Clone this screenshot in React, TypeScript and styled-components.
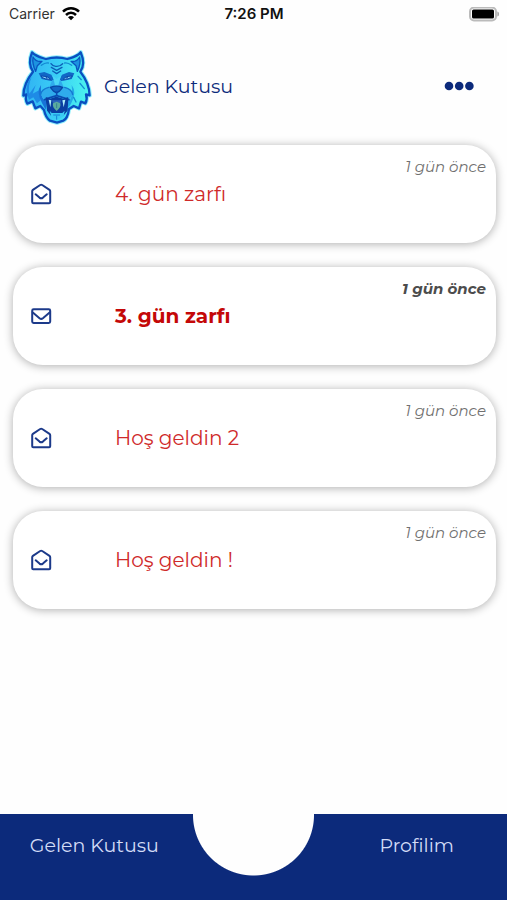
import React from "react";
import styled, { createGlobalStyle } from "styled-components";

const navy = "#0c2a7b";

const GlobalStyle = createGlobalStyle`
  *, *::before, *::after { box-sizing: border-box; }
  body {
    margin: 0;
    background: #fefefe;
    font-family: Montserrat, Inter, sans-serif;
    color: ${navy};
    -webkit-font-smoothing: antialiased;
  }
  button { font: inherit; color: inherit; background: none; border: 0; padding: 0; cursor: pointer; }
`;

const Screen = styled.div`
  min-height: 100vh;
  display: flex;
  flex-direction: column;
`;

const StatusBar = styled.div`
  display: grid;
  grid-template-columns: 1fr auto 1fr;
  align-items: center;
  height: 28px;
  padding: 0 8px 0 9px;
  font-family: Inter, sans-serif;
  font-size: 14px;
  line-height: 20px;
  color: #111;
`;

const Carrier = styled.span`
  display: flex;
  align-items: center;
  gap: 7px;
  color: #333;
`;

const Clock = styled.time`
  font-size: 15px;
  font-weight: 600;
`;

const Battery = styled.span`
  display: flex;
  justify-content: flex-end;
`;

const Header = styled.header`
  display: flex;
  align-items: center;
  height: 92px;
  margin: 12px 0 13px;
  padding: 0 33px 0 15px;
`;

const Title = styled.h1`
  flex: 1;
  margin: 0 0 0 4px;
  font-size: 19px;
  line-height: 27px;
  font-weight: 400;
`;

const MenuButton = styled.button`
  display: flex;
  align-items: center;
  height: 32px;
`;

const Inbox = styled.main`
  flex: 1;
  padding: 0 11px 24px 13px;
`;

const MessageList = styled.ul`
  display: flex;
  flex-direction: column;
  gap: 24px;
  margin: 0;
  padding: 0;
  list-style: none;
`;

const MessageCard = styled.button<{ $unread: boolean }>`
  display: grid;
  grid-template-columns: 84px 1fr auto;
  align-items: center;
  width: 100%;
  min-height: 98px;
  padding: 12px 10px 12px 18px;
  border-radius: 30px;
  background: #fff;
  box-shadow: 0 1px 10px rgba(0, 0, 0, 0.32);
  text-align: left;
  font-weight: ${(p) => (p.$unread ? 700 : 400)};
`;

const Envelope = styled.span`
  display: flex;
`;

const Subject = styled.span<{ $unread: boolean }>`
  font-size: 20px;
  line-height: 28px;
  color: ${(p) => (p.$unread ? "#c40808" : "#cf2a2a")};
`;

const Age = styled.span<{ $unread: boolean }>`
  align-self: start;
  font-size: 15px;
  line-height: 20px;
  font-style: italic;
  color: ${(p) => (p.$unread ? "#4c4c4c" : "#707070")};
`;

const TabBar = styled.nav`
  display: grid;
  grid-template-columns: 1fr 122px 1fr;
  height: 86px;
  background: radial-gradient(circle at 50% 1px, #fefefe 60px, ${navy} 61px);
`;

const Tab = styled.a`
  grid-row: 1;
  padding: 18px 0 0;
  font-size: 19px;
  line-height: 28px;
  text-align: center;
  text-decoration: none;
  color: #d3dcf6;

  &:first-child { grid-column: 1; padding-right: 4px; }
  &:last-child { grid-column: 3; padding-left: 12px; }
`;

const WifiIcon = () => (
  <svg width="18" height="14" viewBox="0 0 18 14" aria-hidden="true">
    <g fill="none" stroke="#000" strokeWidth="2.5">
      <path d="M1 4.700C5.500.2 12.500.2 17 4.700" />
      <path d="M4 8c2.900-2.900 7.100-2.900 10 0" />
    </g>
    <path d="M6 10.200c1.800-1.600 4.200-1.600 6 0L9 13.300Z" />
  </svg>
);

const BatteryIcon = () => (
  <svg width="31" height="15" viewBox="0 0 31 15" aria-label="Battery full" role="img">
    <rect x="2" y="0.500" width="26" height="13" rx="4" fill="#fff" stroke="#bbb" strokeWidth="2" />
    <rect x="4" y="2.500" width="22" height="9" rx="1.500" />
    <path d="M29.300 4.500c2.800 1 2.800 4 0 5Z" fill="#aaa" />
  </svg>
);

const DotsIcon = () => (
  <svg width="30" height="10" viewBox="0 0 30 10" fill={navy} aria-hidden="true">
    <circle cx="5" cy="5" r="4.300" />
    <circle cx="15.200" cy="5" r="4.300" />
    <circle cx="25.400" cy="5" r="4.300" />
  </svg>
);

const EnvelopeIcon = ({ open }: { open: boolean }) => (
  <svg
    width="21"
    height="22"
    viewBox="0 0 21 22"
    fill="none"
    stroke="#1c3a8a"
    strokeWidth="2"
    strokeLinejoin="round"
    strokeLinecap="round"
    role="img"
    aria-label={open ? "Okundu" : "Okunmadı"}
  >
    {open ? (
      <>
        <path d="M1.200 8.200Q1.200 7.400 1.900 6.900L9.200 2Q10.200 1.400 11.200 2L18.500 6.900Q19.200 7.400 19.200 8.200V19.300q0 1-1 1h-16q-1 0-1-1Z" />
        <path d="m4.700 11.300 3.800 3.300q1.700 1.300 3.400 0l3.800-3.300" />
      </>
    ) : (
      <>
        <rect x="1.200" y="4.300" width="18" height="13.700" rx="1.400" />
        <path d="M1.800 7.500 8.500 13.200q1.700 1.300 3.400 0l6.700-5.700" />
      </>
    )}
  </svg>
);

const head =
  "M51 34C64 47 77 49 93 54Q125 45 157 54C174 49 187 47 197 34C206 55 207 77 196 92C211 111 223 137 224 163L213 160Q218 174 211 187L198 182L192 202L176 195L162 204Q158 233 145 239L126 245L105 239Q92 230 87 207L76 195L61 202L53 181L37 188Q29 174 35 160L25 164C25 137 39 111 54 92C43 76 43 54 51 34Z";

const TigerLogo = () => (
  <svg width="85" height="90" viewBox="0 0 255 270" role="img" aria-label="Tiger">
    <defs>
      <linearGradient id="fur" x1="0" x2="1" y1="0.2" y2="0.3">
        <stop offset="0" stopColor="#2fb0f2" />
        <stop offset="0.5" stopColor="#3acdf6" />
        <stop offset="1" stopColor="#4bf3ee" />
      </linearGradient>
    </defs>
    <g strokeLinejoin="round" strokeLinecap="round">
      <path d={head} fill="none" stroke="#8df0fc" strokeWidth="13" />
      <path d={head} fill="url(#fur)" stroke="#0a4fc0" strokeWidth="7" />
      <path d="M54 48Q63 64 81 61L67 74L62 91Q51 70 54 48ZM194 48Q185 64 168 61L183 74L187 91Q198 70 194 48Z" fill="#1c93e0" stroke="#0a55c0" strokeWidth="4" />
      <path d="M50 108Q38 135 43 158L62 132L53 158L72 148L77 178L66 187L55 169L42 176L36 158Q30 128 50 108Z" fill="#1e8be6" />
      <path d="M78 132Q62 152 82 188L92 206L97 170L86 176Q76 166 78 132Z" fill="#1873d8" />
      <path d="M170 132Q187 154 168 188L160 200L156 170L165 176Q174 164 170 132Z" fill="#23a8e6" />
      <path d="M71 97L88 93L109 101L119 121L104 119L80 114ZM178 97L162 93L141 101L131 121L146 119L170 114Z" fill="#1166c6" />
      <path d="M79 105L97 107L107 115Q91 116 84 111ZM171 105L154 107L144 115Q159 116 166 111Z" fill="#8bd3f8" stroke="#0a48ac" strokeWidth="3" />
      <circle cx="95" cy="110" r="3" fill="#1455b5" />
      <circle cx="156" cy="110" r="3" fill="#1455b5" />
      <path d="M112 117L103 138Q80 142 77 160L88 177L105 167L126 163L147 167L162 177L173 160Q170 142 146 138L137 117" fill="#2fabec" />
      <path d="M77 160Q80 144 101 139M173 160Q170 144 149 139" fill="none" stroke="#1477d2" strokeWidth="4" />
      <path d="M113 104L120 133H130L138 104L125 114Z" fill="#4ad5f7" />
      <path d="M106 139Q125 132 143 139L133 151Q125 158 116 151Z" fill="#1267c5" stroke="#0845a5" strokeWidth="4" />
      <path d="M125 154V164M88 176Q104 170 125 164Q146 170 162 176" fill="none" stroke="#0a4bb2" strokeWidth="5" />
      <path d="M94 171L106 175L124 169L145 175L158 171L156 208L144 222H109L98 208Z" fill="#0a3fa2" stroke="#0a3fa2" strokeWidth="4" />
      <path d="M101 176L109 178L106 199ZM151 176L142 178L146 199Z" fill="#aeeefb" />
      <path d="M111 178H139L136 187H114Z" fill="#2b64bc" />
      <path d="M114 187L125 182L136 187Q139 199 125 210Q111 199 114 187Z" fill="#5cab9f" />
      <path d="M125 188V200" stroke="#35848f" strokeWidth="3" />
      <path d="M104 209L110 216H142L149 209L146 226L126 237L109 227Z" fill="#3acbf4" />
      <path d="M116 222H134M125 225V235" fill="none" stroke="#1580d6" strokeWidth="3" />
      <path
        d="M108 68Q114 77 124 76Q134 77 143 68M109 79L125 88L141 79M113 90L125 98L137 90"
        fill="none"
        stroke="#0d5fb8"
        strokeWidth="4"
      />
      <path
        d="M79 73Q91 64 100 66M170 73Q158 64 149 66M199 116L189 106M208 143L195 127M183 183L176 169"
        fill="none"
        stroke="#148bd4"
        strokeWidth="4"
      />
    </g>
  </svg>
);

const messages = [
  { subject: "4. gün zarfı", age: "1 gün önce", unread: false },
  { subject: "3. gün zarfı", age: "1 gün önce", unread: true },
  { subject: "Hoş geldin 2", age: "1 gün önce", unread: false },
  { subject: "Hoş geldin !", age: "1 gün önce", unread: false },
];

export default function App() {
  return (
    <>
      <GlobalStyle />
      <Screen>
        <StatusBar>
          <Carrier>
            Carrier
            <WifiIcon />
          </Carrier>
          <Clock>7:26 PM</Clock>
          <Battery>
            <BatteryIcon />
          </Battery>
        </StatusBar>
        <Header>
          <TigerLogo />
          <Title>Gelen Kutusu</Title>
          <MenuButton type="button" aria-label="Menü">
            <DotsIcon />
          </MenuButton>
        </Header>
        <Inbox>
          <MessageList>
            {messages.map((m) => (
              <li key={m.subject}>
                <MessageCard type="button" $unread={m.unread}>
                  <Envelope>
                    <EnvelopeIcon open={!m.unread} />
                  </Envelope>
                  <Subject $unread={m.unread}>{m.subject}</Subject>
                  <Age $unread={m.unread}>{m.age}</Age>
                </MessageCard>
              </li>
            ))}
          </MessageList>
        </Inbox>
        <TabBar>
          <Tab href="#inbox">Gelen Kutusu</Tab>
          <Tab href="#profile">Profilim</Tab>
        </TabBar>
      </Screen>
    </>
  );
}
